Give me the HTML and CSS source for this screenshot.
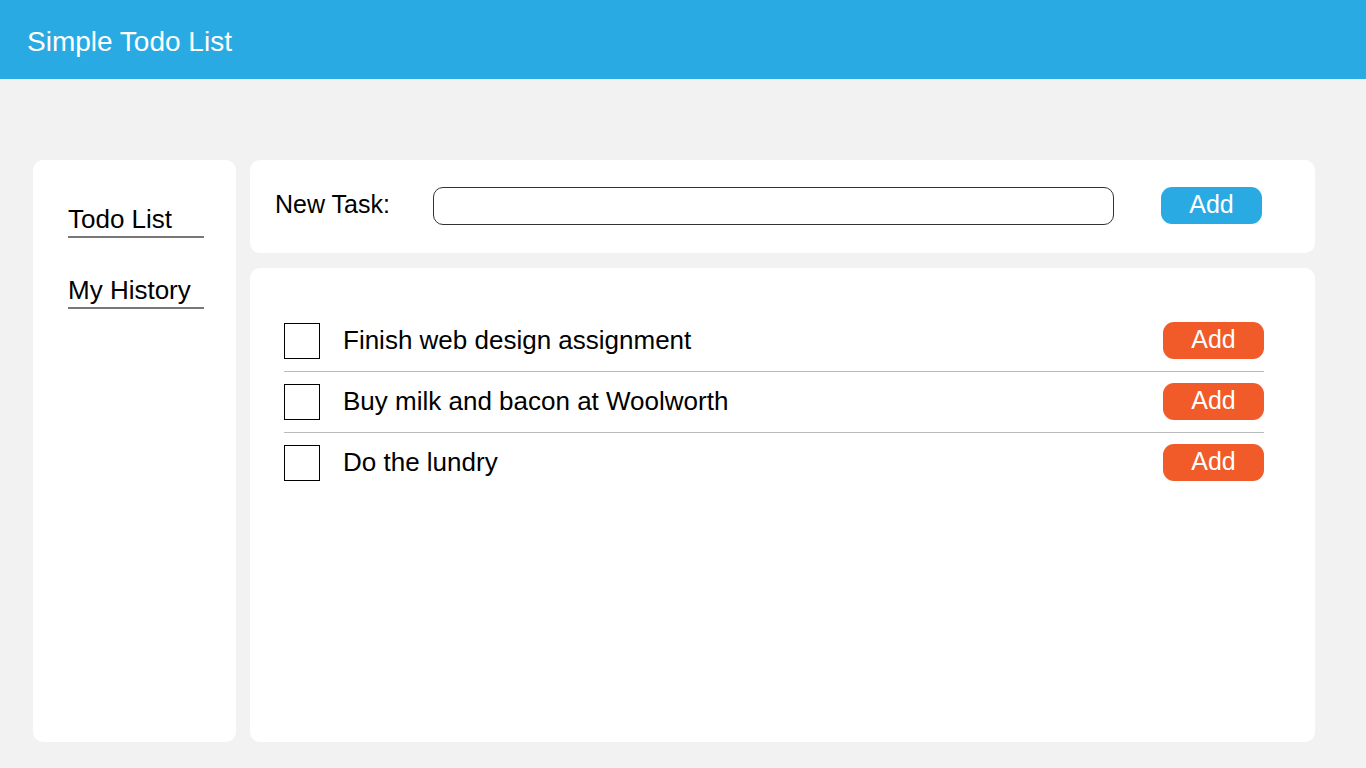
FILE: index.html
```html
<!DOCTYPE html>
<html>
<head>
<meta charset="utf-8">
<title>Simple Todo List</title>
<link rel="stylesheet" href="styles.css">
</head>
<body>
<header class="topbar"><h1 class="title">Simple Todo List</h1></header>
<main class="layout">
  <nav class="sidebar">
    <a class="nav-link" href="#">Todo List</a>
    <a class="nav-link" href="#">My History</a>
  </nav>
  <section class="content">
    <div class="card new-task">
      <label class="label" for="task">New Task:</label>
      <input class="task-input" id="task" type="text">
      <button class="btn btn-blue">Add</button>
    </div>
    <div class="card list">
      <div class="row">
        <span class="check"></span>
        <span class="task-text">Finish web design assignment</span>
        <button class="btn btn-orange">Add</button>
      </div>
      <div class="row">
        <span class="check"></span>
        <span class="task-text">Buy milk and bacon at Woolworth</span>
        <button class="btn btn-orange">Add</button>
      </div>
      <div class="row">
        <span class="check"></span>
        <span class="task-text">Do the lundry</span>
        <button class="btn btn-orange">Add</button>
      </div>
    </div>
  </section>
</main>
</body>
</html>
```
FILE: styles.css
```css
* { box-sizing: border-box; }
html, body { margin: 0; padding: 0; }
body {
  background: #f2f2f2;
  font-family: "Liberation Sans", Arial, sans-serif;
  color: #000;
  width: 1366px;
  height: 768px;
  overflow: hidden;
}
.topbar {
  height: 79px;
  background: #29aae2;
  display: flex;
  align-items: center;
  padding-left: 27px;
}
.title {
  margin: 0;
  font-weight: normal;
  font-size: 28px;
  color: #fff;
  padding-top: 5px;
}
.layout {
  display: flex;
  gap: 14px;
  padding: 81px 0 0 33px;
}
.sidebar {
  width: 203px;
  height: 582px;
  background: #fff;
  border-radius: 10px;
  padding: 44px 0 0 35px;
  display: flex;
  flex-direction: column;
  gap: 37px;
}
.nav-link {
  display: block;
  width: 136px;
  font-size: 26px;
  color: #000;
  text-decoration: none;
  line-height: 30px;
  padding-bottom: 2px;
  border-bottom: 2px solid #777;
}
.content {
  width: 1065px;
  display: flex;
  flex-direction: column;
  gap: 15px;
}
.card {
  background: #fff;
  border-radius: 10px;
}
.new-task {
  height: 93px;
  display: flex;
  align-items: center;
  padding: 0 0 0 25px;
}
.label {
  font-size: 25px;
  width: 158px;
  margin-top: -4px;
}
.task-input {
  width: 681px;
  height: 38px;
  border: 1px solid #333;
  border-radius: 10px;
  outline: none;
  margin: 0 47px 0 0;
  font: inherit;
  margin-top: -2px;
}
.btn {
  width: 101px;
  height: 37px;
  border: 0;
  border-radius: 11px;
  color: #fff;
  font-family: "Liberation Sans", Arial, sans-serif;
  font-size: 25px;
  padding: 0 0 3px 0;
  line-height: 33px;
}
.btn-blue {
  background: #29aae2;
  margin-top: -2px;
}
.btn-orange { background: #f15a29; }
.list {
  height: 474px;
  padding: 43px 51px 0 34px;
}
.row {
  display: flex;
  align-items: center;
  padding: 11px 0 12px 0;
  border-bottom: 1px solid #bbb;
}
.row:last-child { border-bottom: 0; }
.check {
  width: 36px;
  height: 36px;
  border: 1px solid #000;
  flex: none;
}
.task-text {
  font-size: 26px;
  margin-left: 23px;
  flex: 1;
}
```
